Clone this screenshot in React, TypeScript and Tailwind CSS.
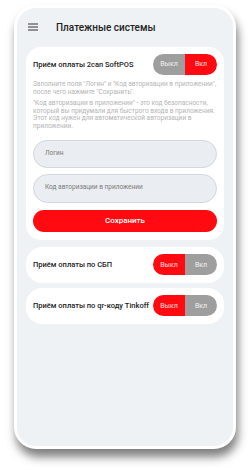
import * as React from 'react';

const font = { fontFamily: 'Roboto, "Noto Sans", sans-serif' };

function Toggle({ on }: { on: boolean }) {
  return (
    <div className="flex h-[21px] w-[64px] shrink-0 overflow-hidden rounded-full text-[7px] text-white/85">
      <div className={`flex flex-1 items-center justify-center ${on ? 'bg-[#9e9e9e]' : 'bg-[#ff0a10]'}`}>Выкл</div>
      <div className={`flex flex-1 items-center justify-center ${on ? 'bg-[#ff0a10]' : 'bg-[#9e9e9e]'}`}>Вкл</div>
    </div>
  );
}

function Row({ title, on, className }: { title: string; on: boolean; className?: string }) {
  return (
    <div className={`flex h-[36px] items-center justify-between rounded-[16px] bg-white px-[7px] ${className ?? ''}`}>
      <span className="text-[7.5px] font-medium text-[#222]">{title}</span>
      <Toggle on={on} />
    </div>
  );
}

export default function App() {
  return (
    <div className="h-[470px] w-[250px] bg-white pl-[14px] pt-[5px]" style={font}>
      <div className="h-[444px] w-[222px] rounded-[22px] border-[3px] border-white bg-[#eef2f5] shadow-[2px_8px_10px_rgba(0,0,0,0.5)]">
        <div className="flex h-[36px] items-center pl-[11px] pt-[2px]">
          <svg width="10" height="8" viewBox="0 0 10 8" className="text-[#333]">
            <path d="M0 1h10M0 4h10M0 7h10" stroke="currentColor" strokeWidth="1.2" />
          </svg>
          <span className="ml-[18px] text-[10px] font-medium text-[#222]">Платежные системы</span>
        </div>

        <div className="mt-[3px] flex flex-col px-[9px]">
          <div className="rounded-[15px] bg-white px-[7px] pb-[8px] pt-[7px]">
            <div className="flex items-center justify-between">
              <span className="text-[7.5px] font-medium text-[#222]">Приём оплаты 2can SoftPOS</span>
              <Toggle on />
            </div>
            <p className="mt-[5px] text-[6.5px] leading-[8px] text-[#b4b4b4]">
              Заполните поля "Логин" и "Код авторизации в приложении", после чего нажмите "Сохранить".
            </p>
            <p className="mt-[4px] text-[6.5px] leading-[7.7px] text-[#b4b4b4]">
              "Код авторизации в приложении" - это код безопасности, который вы придумали для быстрого входа в приложения. Этот код нужен для автоматической авторизации в приложении.
            </p>
            <div className="mt-[9px] flex h-[28px] items-center rounded-full border border-[#d3d7dc] bg-[#eaedf1] pl-[11px] text-[6.5px] text-[#7a7a7a]">
              Логин
            </div>
            <div className="mt-[6px] flex h-[29px] items-center rounded-full border border-[#d3d7dc] bg-[#eaedf1] pl-[11px] text-[6.5px] text-[#7a7a7a]">
              Код авторизации в приложении
            </div>
            <div className="mt-[7px] flex h-[22px] items-center justify-center rounded-full bg-[#ff0a10] text-[8px] font-medium text-white">
              Сохранить
            </div>
          </div>

          <Row title="Приём оплаты по СБП" on={false} className="mt-[7px]" />
          <Row title="Приём оплаты по qr-коду Tinkoff" on={false} className="mt-[5px]" />
        </div>
      </div>
    </div>
  );
}
